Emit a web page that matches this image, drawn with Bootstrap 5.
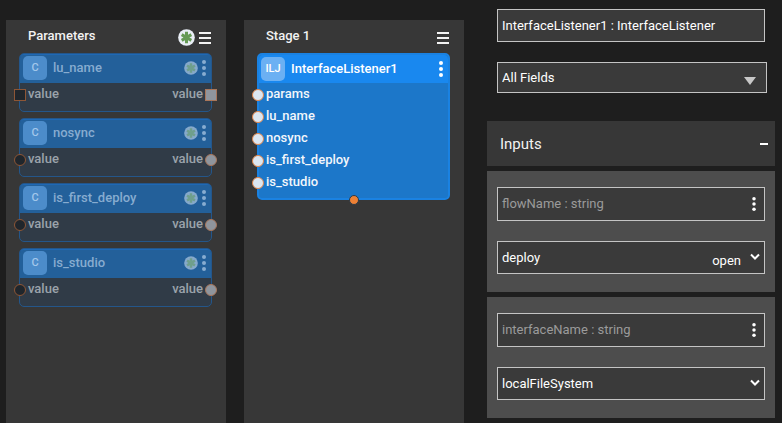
<!DOCTYPE html>
<html lang="en">
<head>
<meta charset="utf-8">
<meta name="viewport" content="width=device-width, initial-scale=1">
<title>Flow editor</title>
<link href="https://cdn.jsdelivr.net/npm/bootstrap@5.3.0/dist/css/bootstrap.min.css" rel="stylesheet">
<style>
body { background: #1e1e1e; color: #f2f2f2; font: 500 13px/20px Roboto, sans-serif; overflow-x: hidden; }
.editor { display: grid; grid-template-columns: minmax(0, 220fr) minmax(0, 220fr) minmax(0, 293fr); column-gap: 18px; padding: 0 7px 0 6px; min-height: 100vh; }
.lane { background: #373737; margin-top: 20px; }
.lane-head { height: 33px; padding: 2px 15px 0 22px; }
.lane-head h2 { font: inherit; margin: 0 auto 4px 0; }
.tool { background: none; border: 0; padding: 0; color: inherit; display: flex; }
.nodes { padding: 0 14px 0 13px; gap: 6px; }
.node { border: 1px solid #24568a; border-radius: 5px; background: #303b47; color: #9ba3ab; height: 59px; position: relative; }
.node-head { background: #23609a; border-top: 1px solid #1f68b3; border-radius: 4px 4px 0 0; height: 29px; margin-bottom: 1px; padding: 0 5px 2px 3px; color: #87acd0; }
.node-head h3 { font: inherit; margin: 0 auto 0 6px; }
.tile { width: 24px; height: 24px; border-radius: 5px; background: #4c8cca; color: #a3c7ea; font-size: 11px; }
.node-row { height: 22px; padding: 0 8px; position: relative; }
.port { position: absolute; top: 5px; width: 12px; height: 12px; border: 1px solid #8d5636; border-radius: 50%; background: #20262c; }
.port-in { left: -6px; }
.port-out { right: -6px; background: #8f959d; border-color: #a9765a; }
.port-square { border-radius: 0; }
.node-live { background: #1c77c9; border: 2px solid #1a82e2; color: #f2f6fb; height: 147px; }
.node-live .node-head { background: #1988ef; border-color: #1988ef; color: #fff; height: 28px; padding: 0 5px 2px 2px; }
.node-live .tile { background: #6bb0f3; color: #fff; }
.node-live .node-row { padding-left: 7px; }
.node-live .port-in { background: #dbe6f1; border-color: #e0864c; left: -7px; }
.port-end { position: absolute; left: 50%; bottom: -7px; width: 10px; height: 10px; margin-left: -5px; border-radius: 50%; background: #ee8135; border: 1px solid #2a3a48; }
.side { padding: 9px 0 5px 5px; font-weight: 400; }
.side-top { padding: 0 8px 0 10px; }
.box { display: block; width: 100%; height: 34px; background-color: #3a3a3a; border: 1px solid #c4c4c4; border-radius: 0; color: #fff; padding: 0 4px; font: inherit; }
.box-title { height: 33px; width: calc(100% - 2px); margin-bottom: 20px; }
select.box { appearance: none; height: 33px; background-repeat: no-repeat; background-position: right 4px top 11px;
  background-image: url("data:image/svg+xml,%3Csvg xmlns='http://www.w3.org/2000/svg' width='10' height='8'%3E%3Cpath d='M1 1.5l4 4 4-4' fill='none' stroke='%23fff' stroke-width='2'/%3E%3C/svg%3E"); }
select.box-filter { height: 31px; background-position: right 10px top 14px;
  background-image: url("data:image/svg+xml,%3Csvg xmlns='http://www.w3.org/2000/svg' width='12' height='8'%3E%3Cpath d='M0 0h12L6 8z' fill='%23c8c8c8'/%3E%3C/svg%3E"); }
.section-head { background: #373737; height: 45px; padding: 0 7px 0 13px; margin: 28px 0 5px; }
.section-head h2 { font: inherit; font-size: 15px; margin: 0; }
.group-box { background: #4d4d4d; padding: 16px 10px 18px; gap: 20px; }
.group-box + .group-box { margin-top: 5px; }
.field-name { color: #9b9b9b; padding-right: 8px; }
.open-link { position: absolute; right: 24px; top: 10px; color: #fff; text-decoration: none; }
</style>
<script src="https://cdn.jsdelivr.net/npm/bootstrap@5.3.0/dist/js/bootstrap.bundle.min.js"></script>
</head>
<body>
<svg class="d-none" aria-hidden="true">
  <symbol id="star" viewBox="0 0 18 18"><circle cx="9" cy="9" r="8.8" fill="var(--disc)"/><path d="M9 3v12M3.9 6l10.2 6M3.9 12l10.2-6" stroke="var(--leaf)" stroke-width="3.2"/></symbol>
  <symbol id="bars" viewBox="0 0 12 12"><path d="M0 1h12M0 6h12M0 11h12" stroke="currentColor" stroke-width="2"/></symbol>
  <symbol id="dots" viewBox="0 0 4 16"><circle cx="2" cy="2" r="2"/><circle cx="2" cy="8" r="2"/><circle cx="2" cy="14" r="2"/></symbol>
</svg>
<main class="editor">
  <section class="lane">
    <div class="lane-head d-flex align-items-center">
      <h2>Parameters</h2>
      <svg width="17" height="17" class="me-1" style="--disc:#e9eef5;--leaf:#659a55"><use href="#star"/></svg>
      <button class="tool" aria-label="Parameters menu"><svg width="12" height="12"><use href="#bars"/></svg></button>
    </div>
    <div class="nodes d-flex flex-column" id="params"></div>
  </section>
  <section class="lane">
    <div class="lane-head d-flex align-items-center">
      <h2>Stage 1</h2>
      <button class="tool" aria-label="Stage menu"><svg width="12" height="12"><use href="#bars"/></svg></button>
    </div>
    <div class="nodes d-flex flex-column">
      <article class="node node-live">
        <div class="node-head d-flex align-items-center">
          <span class="tile d-flex align-items-center justify-content-center">ILJ</span>
          <h3>InterfaceListener1</h3>
          <button class="tool" aria-label="Node menu"><svg width="4" height="16" fill="currentColor"><use href="#dots"/></svg></button>
        </div>
        <div class="node-row"><i class="port port-in"></i>params</div>
        <div class="node-row"><i class="port port-in"></i>lu_name</div>
        <div class="node-row"><i class="port port-in"></i>nosync</div>
        <div class="node-row"><i class="port port-in"></i>is_first_deploy</div>
        <div class="node-row"><i class="port port-in"></i>is_studio</div>
        <i class="port-end"></i>
      </article>
    </div>
  </section>
  <aside class="side">
    <div class="side-top">
      <input class="box box-title" aria-label="Node title" value="InterfaceListener1 : InterfaceListener">
      <select class="box box-filter" id="filter" aria-label="Field filter"><option>All Fields</option></select>
    </div>
    <div class="section-head d-flex align-items-center justify-content-between">
      <h2>Inputs</h2>
      <button class="tool" aria-label="Collapse inputs"><svg width="8" height="2"><path d="M0 1h8" stroke="#fff" stroke-width="2"/></svg></button>
    </div>
    <div class="group-box d-flex flex-column">
      <div class="box field-name d-flex align-items-center justify-content-between">
        <label for="flow">flowName : string</label>
        <button class="tool text-white" aria-label="flowName menu"><svg width="4" height="14" fill="currentColor"><use href="#dots"/></svg></button>
      </div>
      <div class="position-relative">
        <select class="box" id="flow"><option>deploy</option></select>
        <a class="open-link" href="#">open</a>
      </div>
    </div>
    <div class="group-box d-flex flex-column">
      <div class="box field-name d-flex align-items-center justify-content-between">
        <label for="iface">interfaceName : string</label>
        <button class="tool text-white" aria-label="interfaceName menu"><svg width="4" height="14" fill="currentColor"><use href="#dots"/></svg></button>
      </div>
      <select class="box" id="iface"><option>localFileSystem</option></select>
    </div>
  </aside>
</main>
<script>
document.getElementById('params').innerHTML = ['lu_name', 'nosync', 'is_first_deploy', 'is_studio'].map((name, i) => {
  const shape = i === 0 ? ' port-square' : '';
  return `<article class="node">
    <div class="node-head d-flex align-items-center">
      <span class="tile d-flex align-items-center justify-content-center">C</span>
      <h3>${name}</h3>
      <svg width="14" height="14" class="me-1" style="--disc:#86a9cb;--leaf:#6f9f8c"><use href="#star"/></svg>
      <button class="tool" aria-label="${name} menu"><svg width="4" height="16" fill="currentColor"><use href="#dots"/></svg></button>
    </div>
    <div class="node-row d-flex justify-content-between"><i class="port port-in${shape}"></i><span>value</span><span>value</span><i class="port port-out${shape}"></i></div>
  </article>`;
}).join('');
</script>
</body>
</html>
